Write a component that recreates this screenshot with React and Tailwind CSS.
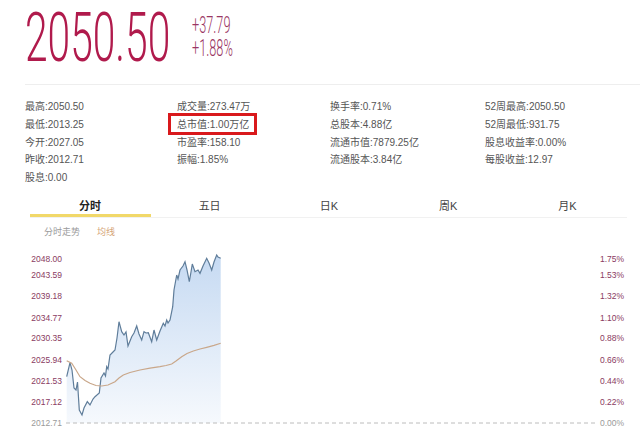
const RED = "#b01a4c"
const PURPLE = "#8a3b62"

const price = [
  [66.7, 376.7], [70, 362.7], [72, 370], [74, 388], [76, 390], [77.5, 382], [79.3, 410], [82, 415], [84, 408],
  [87.3, 401.7], [90, 405], [93, 399], [95, 396.7], [99.3, 393], [101, 378], [104, 373], [105.5, 376],
  [106.7, 366.7], [108, 369], [110, 355], [113, 352], [115, 350], [117, 338], [119, 321.7], [121.7, 331.7],
  [124, 335], [126, 332], [128, 346], [131.7, 336.7], [134, 333], [136.7, 326], [139, 334], [141.7, 340],
  [144, 331.7], [146, 333], [148.3, 332.7], [151.7, 341.7], [154, 330], [156.7, 340], [160, 331],
  [163.3, 323.3], [165, 326], [166.7, 320], [168, 323], [170, 320], [172.7, 306.7], [174, 290], [176.7, 275],
  [178, 279], [180, 270], [183, 266], [185, 261.7], [187, 270], [189.3, 281.7], [191, 272], [192.3, 264],
  [195, 271.7], [198, 270], [200, 273.3], [203, 266], [206.7, 258.3], [209, 263], [211.7, 270], [214, 262],
  [216.7, 255], [218, 257], [220.7, 258.3],
]

const avg = [
  [66.7, 360.7], [71.7, 363.3], [76, 370], [80, 376.7], [85, 380.5], [90, 383.3], [96, 385.5], [101.7, 386],
  [108, 385], [115, 381.7], [119, 378], [123.3, 375], [130, 372.5], [140, 370], [150, 368.2], [160, 366.7],
  [166, 365.5], [171.7, 364], [176, 361], [181.7, 356.7], [187, 353.5], [193.3, 351], [200, 349],
  [206.7, 347.3], [214, 345.3], [220.7, 343.3],
]

const leftLabels = [
  ["2048.00", 259], ["2043.59", 275], ["2039.18", 296], ["2034.77", 318], ["2030.35", 338],
  ["2025.94", 360], ["2021.53", 381], ["2017.12", 402], ["2012.71", 423],
]
const rightLabels = ["1.75%", "1.53%", "1.32%", "1.10%", "0.88%", "0.66%", "0.44%", "0.22%", "0.00%"]

const stats = [
  ["最高:2050.50", "成交量:273.47万", "换手率:0.71%", "52周最高:2050.50"],
  ["最低:2013.25", "总市值:1.00万亿", "总股本:4.88亿", "52周最低:931.75"],
  ["今开:2027.05", "市盈率:158.10", "流通市值:7879.25亿", "股息收益率:0.00%"],
  ["昨收:2012.71", "振幅:1.85%", "流通股本:3.84亿", "每股收益:12.97"],
  ["股息:0.00", "", "", ""],
]

const tabs = ["分时", "五日", "日K", "周K", "月K"]

function pts(list, dy) {
  return list.map(([x, y]) => `${x},${y - dy}`).join(" ")
}

function Chart() {
  const top = 240
  const area = `M${price[0][0]},${423 - top} L` + pts(price, top) + ` L${price[price.length - 1][0]},${423 - top} Z`
  return (
    <svg width="640" height="193" viewBox="0 0 640 193" className="block">
      <defs>
        <linearGradient id="fill" x1="0" y1="0" x2="0" y2="1">
          <stop offset="0%" stopColor="#c6daf2" />
          <stop offset="100%" stopColor="#f6f9fd" />
        </linearGradient>
      </defs>
      <path d={area} fill="url(#fill)" />
      <polyline points={pts(price, top)} fill="none" stroke="#5f7d9a" strokeWidth="1.2" />
      <polyline points={pts(avg, top)} fill="none" stroke="#c9a78a" strokeWidth="1.2" />
      <line x1="66" y1={423 - top} x2="596" y2={423 - top} stroke="#bcbcbc" strokeDasharray="4 3" />
      {leftLabels.map(([t, y], i) => (
        <text key={t} x="62" y={y - top + 3} textAnchor="end" fontSize="8.5" fontFamily="Liberation Sans, sans-serif" fill={i === 8 ? "#9a9a9a" : PURPLE}>
          {t}
        </text>
      ))}
      {rightLabels.map((t, i) => (
        <text key={t} x="600" y={leftLabels[i][1] - top + 3} fontSize="8.5" fontFamily="Liberation Sans, sans-serif" fill={i === 8 ? "#9a9a9a" : PURPLE}>
          {t}
        </text>
      ))}
    </svg>
  )
}

export default function App() {
  return (
    <div className="w-[640px] h-[433px] overflow-hidden bg-white font-['Liberation_Sans','Noto_Sans_CJK_SC',sans-serif]">
      <div className="flex items-start h-[84px] pl-[25px]">
        <div className="w-[150px] h-[75px]">
          <div className="origin-top-left scale-x-[0.59] whitespace-nowrap text-[69px] leading-[75px] font-light font-['Roboto',sans-serif]" style={{ color: RED }}>
            2050.50
          </div>
        </div>
        <div className="ml-[17px] mt-[14px] w-[50px] text-[24px] leading-[23px] font-light text-[#9a3563] font-['Roboto',sans-serif]">
          <div className="origin-top-left scale-x-[0.53] whitespace-nowrap">+37.79</div>
          <div className="origin-top-left scale-x-[0.53] whitespace-nowrap">+1.88%</div>
        </div>
      </div>
      <div className="ml-[25px] border-t border-[#eeeeee]" />
      <div className="pl-[25px] pt-[13px] grid grid-cols-[152px_153px_155px_1fr] text-[10px] text-[#555555]">
        {stats.flat().map((s, i) => (
          <div key={i} className="h-[17.75px] leading-[17.75px] whitespace-nowrap">
            {s === "总市值:1.00万亿" ? (
              <span className="relative">
                {s}
                <span className="absolute -left-[9px] -right-[8px] -top-[6px] -bottom-[5px] border-[3px] border-[#d9191c]" />
              </span>
            ) : (
              s
            )}
          </div>
        ))}
      </div>
      <div className="mt-[11px] ml-[30px] w-[597px] flex border-b border-[#f1f1f1] text-[11px] text-[#444444]">
        {tabs.map((t, i) => (
          <div key={t} className="w-[120px] h-[19px] flex flex-col items-center">
            <div className={i === 0 ? "leading-[16px] font-bold text-[#222222]" : "leading-[16px]"}>{t}</div>
            {i === 0 && <div className="mt-auto w-[121px] h-[3px] bg-[#f1d869]" />}
          </div>
        ))}
      </div>
      <div className="flex gap-[17px] pl-[44px] h-[22px] pt-[8px] items-center text-[9px]">
        <span className="text-[#9b9b9b]">分时走势</span>
        <span className="text-[#d6a679]">均线</span>
      </div>
      <Chart />
    </div>
  )
}
